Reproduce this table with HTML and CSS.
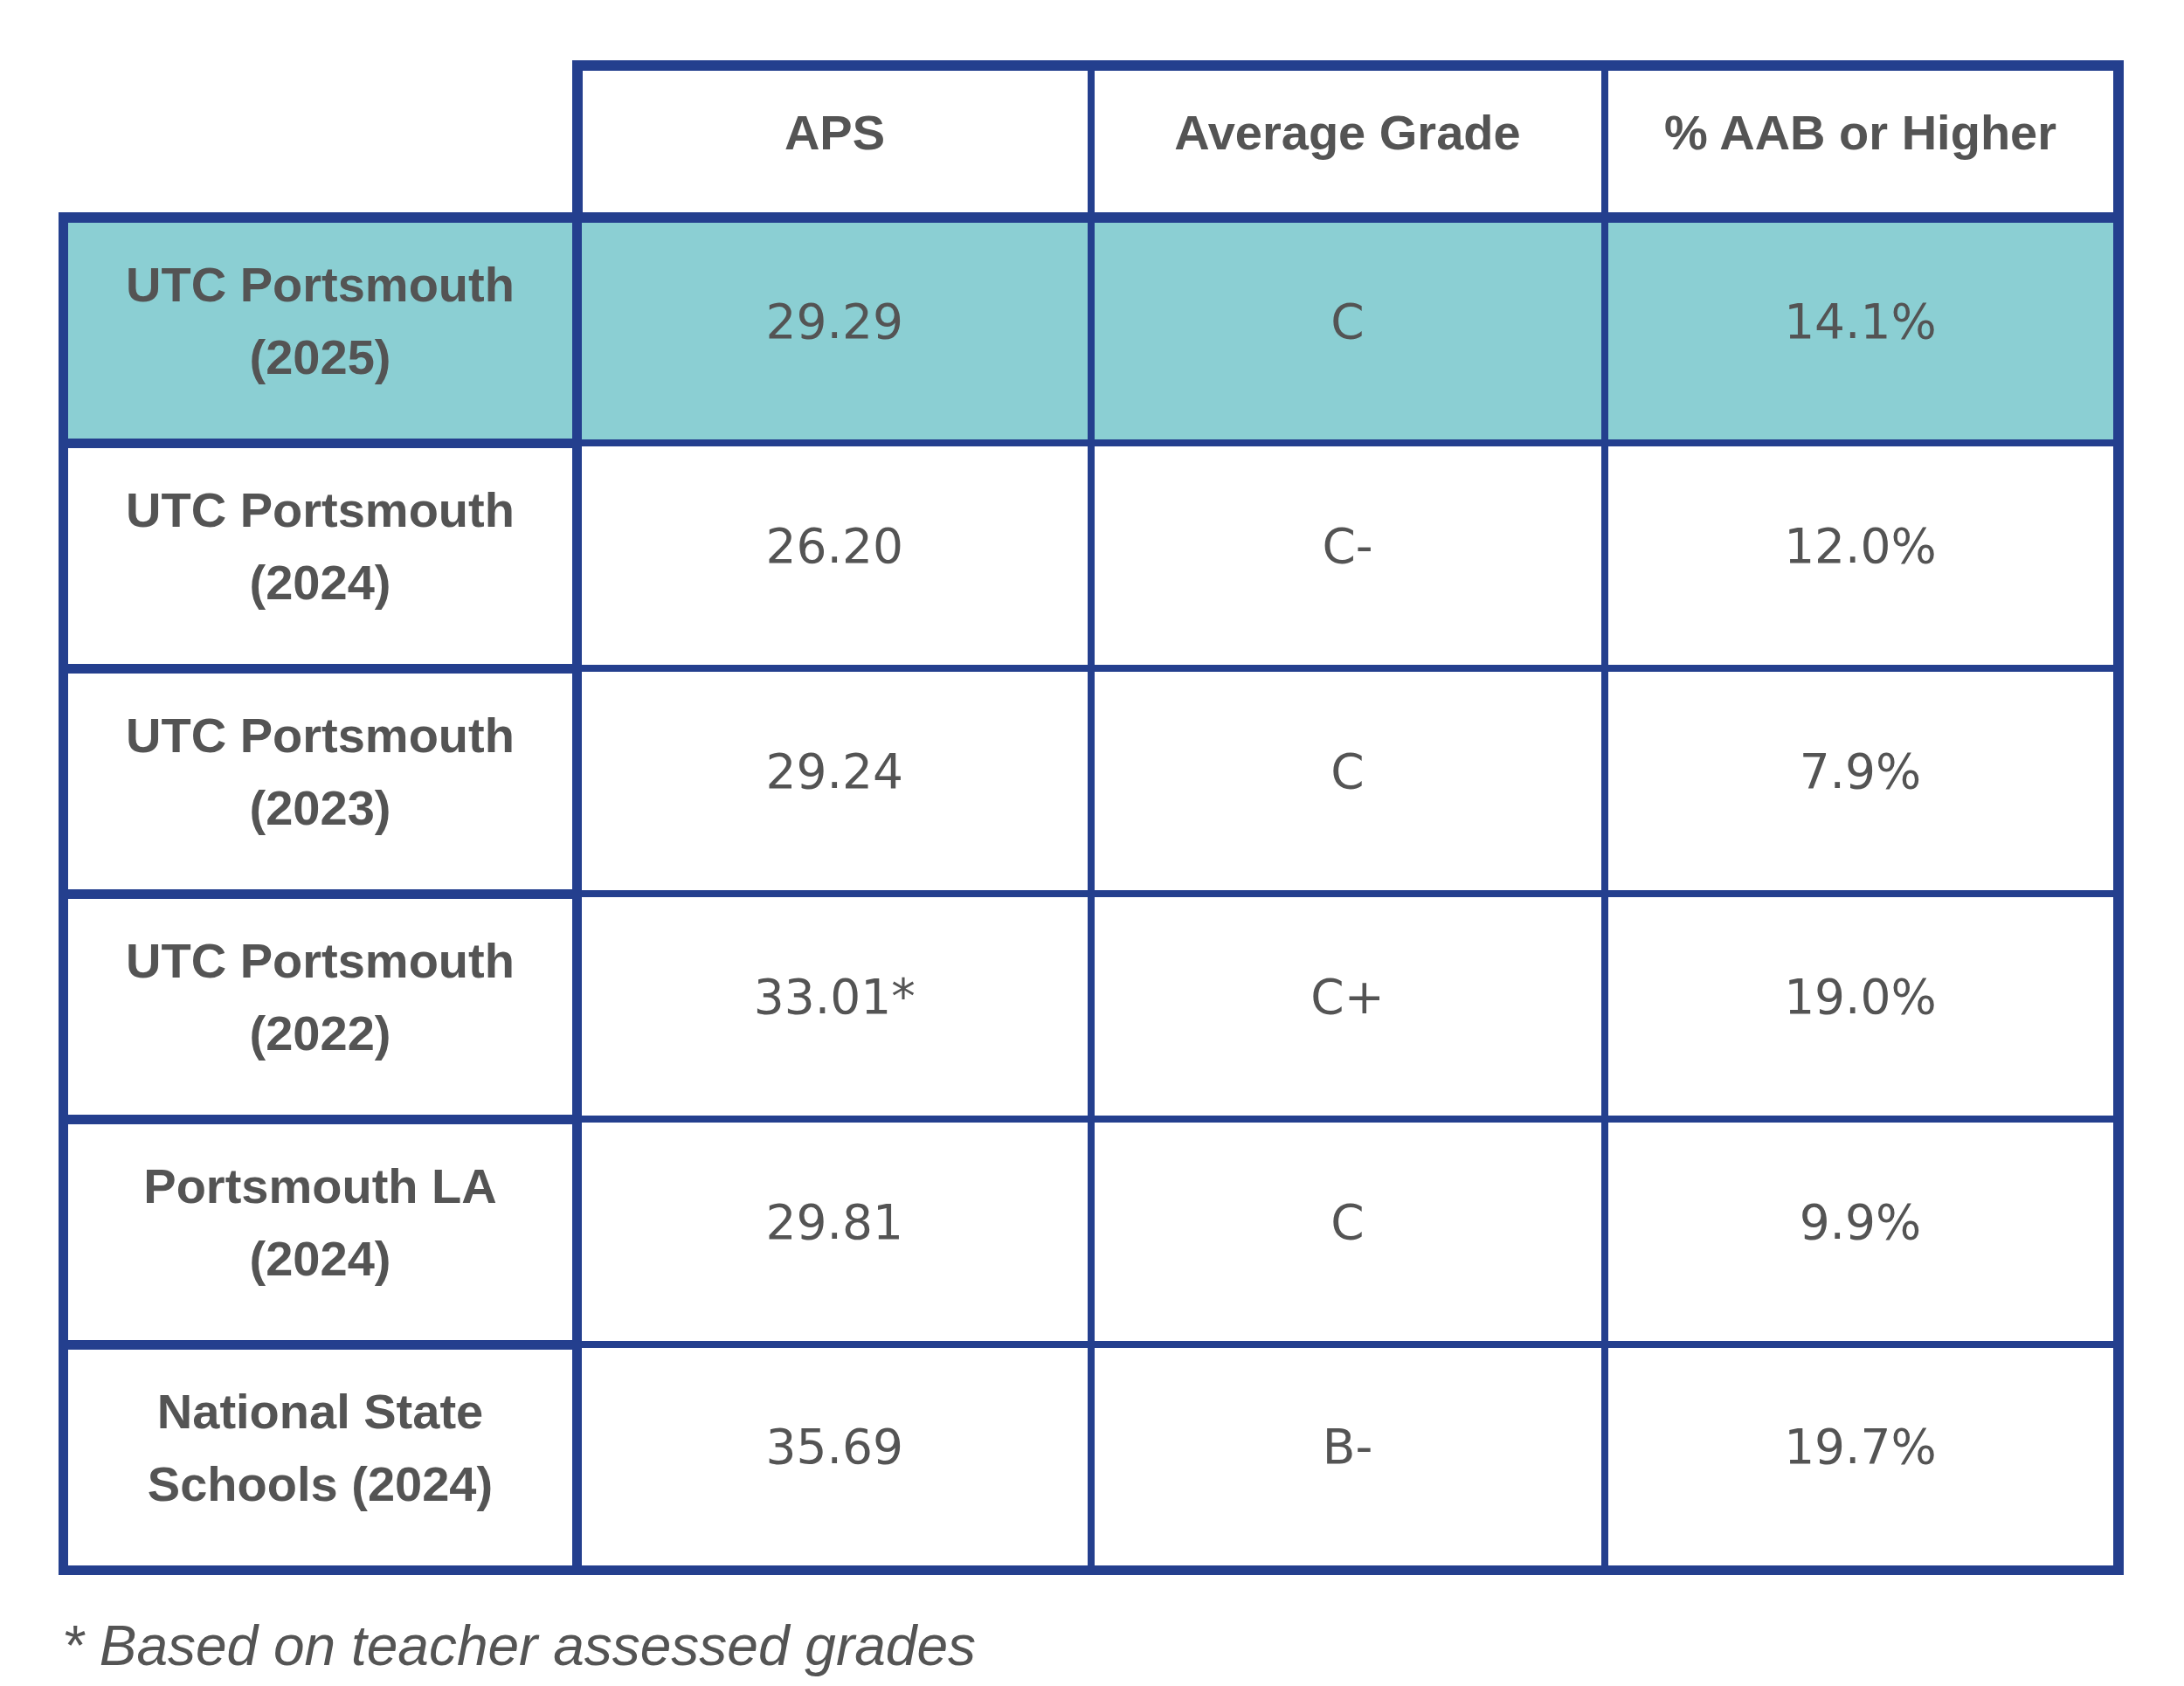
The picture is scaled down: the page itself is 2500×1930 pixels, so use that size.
FILE: index.html
```html
<!DOCTYPE html>
<html lang="en">
<head>
<meta charset="utf-8">
<title>A Level Results</title>
<link rel="stylesheet" href="styles.css">
</head>
<body>
<main class="wrap">
  <table class="results">
    <colgroup>
      <col class="c">
      <col class="c">
      <col class="c">
      <col class="c">
    </colgroup>
    <thead>
      <tr class="head-row">
        <th class="blank"></th>
        <th class="h">APS</th>
        <th class="h">Average Grade</th>
        <th class="h">% AAB or Higher</th>
      </tr>
    </thead>
    <tbody>
      <tr class="highlight">
        <td class="name">UTC Portsmouth<br>(2025)</td>
        <td class="v">29.29</td>
        <td class="v">C</td>
        <td class="v">14.1%</td>
      </tr>
      <tr>
        <td class="name">UTC Portsmouth<br>(2024)</td>
        <td class="v">26.20</td>
        <td class="v">C-</td>
        <td class="v">12.0%</td>
      </tr>
      <tr>
        <td class="name">UTC Portsmouth<br>(2023)</td>
        <td class="v">29.24</td>
        <td class="v">C</td>
        <td class="v">7.9%</td>
      </tr>
      <tr>
        <td class="name">UTC Portsmouth<br>(2022)</td>
        <td class="v">33.01*</td>
        <td class="v">C+</td>
        <td class="v">19.0%</td>
      </tr>
      <tr>
        <td class="name">Portsmouth LA<br>(2024)</td>
        <td class="v">29.81</td>
        <td class="v">C</td>
        <td class="v">9.9%</td>
      </tr>
      <tr>
        <td class="name">National State<br>Schools (2024)</td>
        <td class="v">35.69</td>
        <td class="v">B-</td>
        <td class="v">19.7%</td>
      </tr>
    </tbody>
  </table>
  <p class="note">* Based on teacher assessed grades</p>
</main>
</body>
</html>
```

FILE: styles.css
```css
html, body {
  margin: 0;
  padding: 0;
  background: #ffffff;
}

.wrap {
  padding: 69px 0 0 67px;
}

.results {
  border-collapse: collapse;
  table-layout: fixed;
  width: 2352px;
  color: #545454;
}

.results .c {
  width: 588px;
}

.results th,
.results td {
  padding: 0 0 22px 0;
  text-align: center;
  vertical-align: middle;
}

.head-row {
  height: 174px;
}

.results tbody tr {
  height: 258px;
}

.blank {
  border: none;
}

.h {
  font-family: "Liberation Sans", Arial, sans-serif;
  font-weight: 700;
  font-size: 56px;
  line-height: 63px;
  border: 8px solid #243f8e;
  border-top-width: 12px;
  border-bottom-width: 12px;
}

.blank + .h {
  border-left-width: 12px;
}

.h:last-child {
  border-right-width: 12px;
}

.name {
  font-family: "Liberation Sans", Arial, sans-serif;
  font-weight: 700;
  font-size: 56px;
  line-height: 83px;
  border: 11px solid #243f8e;
}

.v {
  font-family: "DejaVu Sans", Verdana, sans-serif;
  font-weight: 400;
  font-size: 55px;
  line-height: 63px;
  border: 8px solid #243f8e;
}

.v:last-child {
  border-right-width: 12px;
}

.results tbody tr:first-child td {
  border-top-width: 12px;
}

.results tbody tr:last-child td {
  border-bottom-width: 11px;
}

.highlight td {
  background: #8bcfd3;
}

.note {
  margin: 45px 0 0 0;
  padding-left: 4px;
  font-family: "Liberation Sans", Arial, sans-serif;
  font-style: italic;
  font-size: 64px;
  line-height: 72px;
  color: #545454;
}
```
